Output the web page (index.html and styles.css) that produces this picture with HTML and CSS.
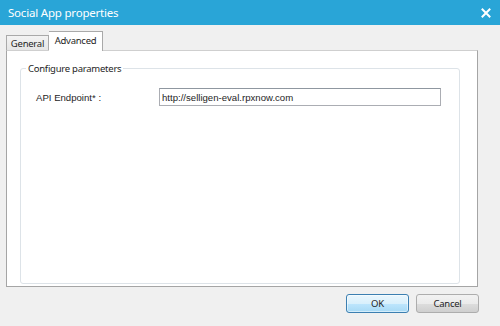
FILE: index.html
```html
<!DOCTYPE html>
<html>
<head>
<meta charset="utf-8">
<link rel="stylesheet" href="styles.css">
</head>
<body>
<div class="window">
  <div class="titlebar">
    <span class="title">Social App properties</span>
    <svg class="close" width="10" height="10" viewBox="0 0 10 10"><path d="M1.5 1.5 L8.5 8.5 M8.5 1.5 L1.5 8.5" stroke="#fff" stroke-width="2" stroke-linecap="square"/></svg>
  </div>
  <div class="content">
    <div class="tabs">
      <div class="tab">General</div>
      <div class="tab active">Advanced</div>
    </div>
    <div class="panel">
      <fieldset class="group">
        <legend>Configure parameters</legend>
        <div class="row">
          <label class="label">API Endpoint* :</label>
          <input class="field" type="text" value="http://selligen-eval.rpxnow.com">
        </div>
      </fieldset>
    </div>
    <div class="buttons">
      <button class="btn ok">OK</button>
      <button class="btn">Cancel</button>
    </div>
  </div>
</div>
</body>
</html>
```
FILE: styles.css
```css
* { box-sizing: border-box; }
html, body { margin: 0; padding: 0; }
body {
  width: 500px;
  height: 326px;
  overflow: hidden;
  background: #f0f0f0;
  font-family: "Noto Sans", "Open Sans", sans-serif;
  font-size: 9.5px;
  letter-spacing: -0.25px;
  color: #1e1e1e;
}
.window { width: 500px; height: 326px; display: flex; flex-direction: column; }
.titlebar {
  height: 25px;
  background: #29a5d7;
  display: flex;
  align-items: center;
  justify-content: space-between;
  padding: 0 9px 0 8px;
  color: #fff;
}
.title { font-size: 11.5px; letter-spacing: -0.2px; }
.close { display: block; }
.content { flex: 1; display: flex; flex-direction: column; padding: 6px 21px 0 6px; }
.tabs { display: flex; align-items: flex-end; height: 19px; position: relative; z-index: 1; }
.tab {
  height: 15px;
  width: 43px;
  border: 1px solid #a9a9a9;
  border-bottom: none;
  background: linear-gradient(#f3f3f3, #e6e6e6);
  display: flex;
  align-items: center;
  justify-content: center;
  padding-top: 1px;
}
.tab.active {
  height: 20px;
  width: 54px;
  margin-bottom: -1px;
  background: #fff;
  border-left: none;
  align-items: flex-start;
  padding-top: 2px;
}
.panel {
  width: 472px;
  height: 237px;
  background: #fff;
  border: 1px solid #a5a5a5;
  border-top-color: #cfcfcf;
  padding: 11px 17px 2px 13px;
  display: flex;
}
.group {
  margin: 0;
  flex: 1;
  border: 1px solid #dde3e8;
  border-radius: 3px;
  padding: 0;
}
.group legend {
  margin-left: 5px;
  padding: 0 2px;
  line-height: 13px;
}
.row { display: flex; align-items: center; margin-top: 13px; }
.label {
  width: 138px;
  padding-left: 15px;
  font-family: "Liberation Sans", Arial, sans-serif;
  font-size: 9.6px;
  letter-spacing: 0;
}
.field {
  width: 282px;
  height: 18px;
  border: 1px solid #abadb3;
  border-top-color: #8f97a0;
  font-family: "Liberation Sans", Arial, sans-serif;
  font-size: 9.6px;
  letter-spacing: 0;
  padding: 0 2px;
  color: #1e1e1e;
  outline: none;
}
.buttons { display: flex; justify-content: flex-end; gap: 7px; margin-top: 7px; }
.btn {
  width: 63px;
  height: 19px;
  padding: 0;
  font-family: "Noto Sans", "Open Sans", sans-serif;
  font-size: 9.5px;
  letter-spacing: -0.25px;
  color: #1e1e1e;
  border: 1px solid #adadad;
  border-radius: 3px;
  background: linear-gradient(#f2f2f2 0%, #ebebeb 50%, #dddddd 51%, #cfcfcf 100%);
}
.btn.ok {
  border-color: #3c7fb1;
  background: linear-gradient(#eaf6fd 0%, #d9f0fc 50%, #bee6fd 51%, #a7d9f5 100%);
  box-shadow: inset 0 0 0 1px rgba(255,255,255,0.5);
}
```
